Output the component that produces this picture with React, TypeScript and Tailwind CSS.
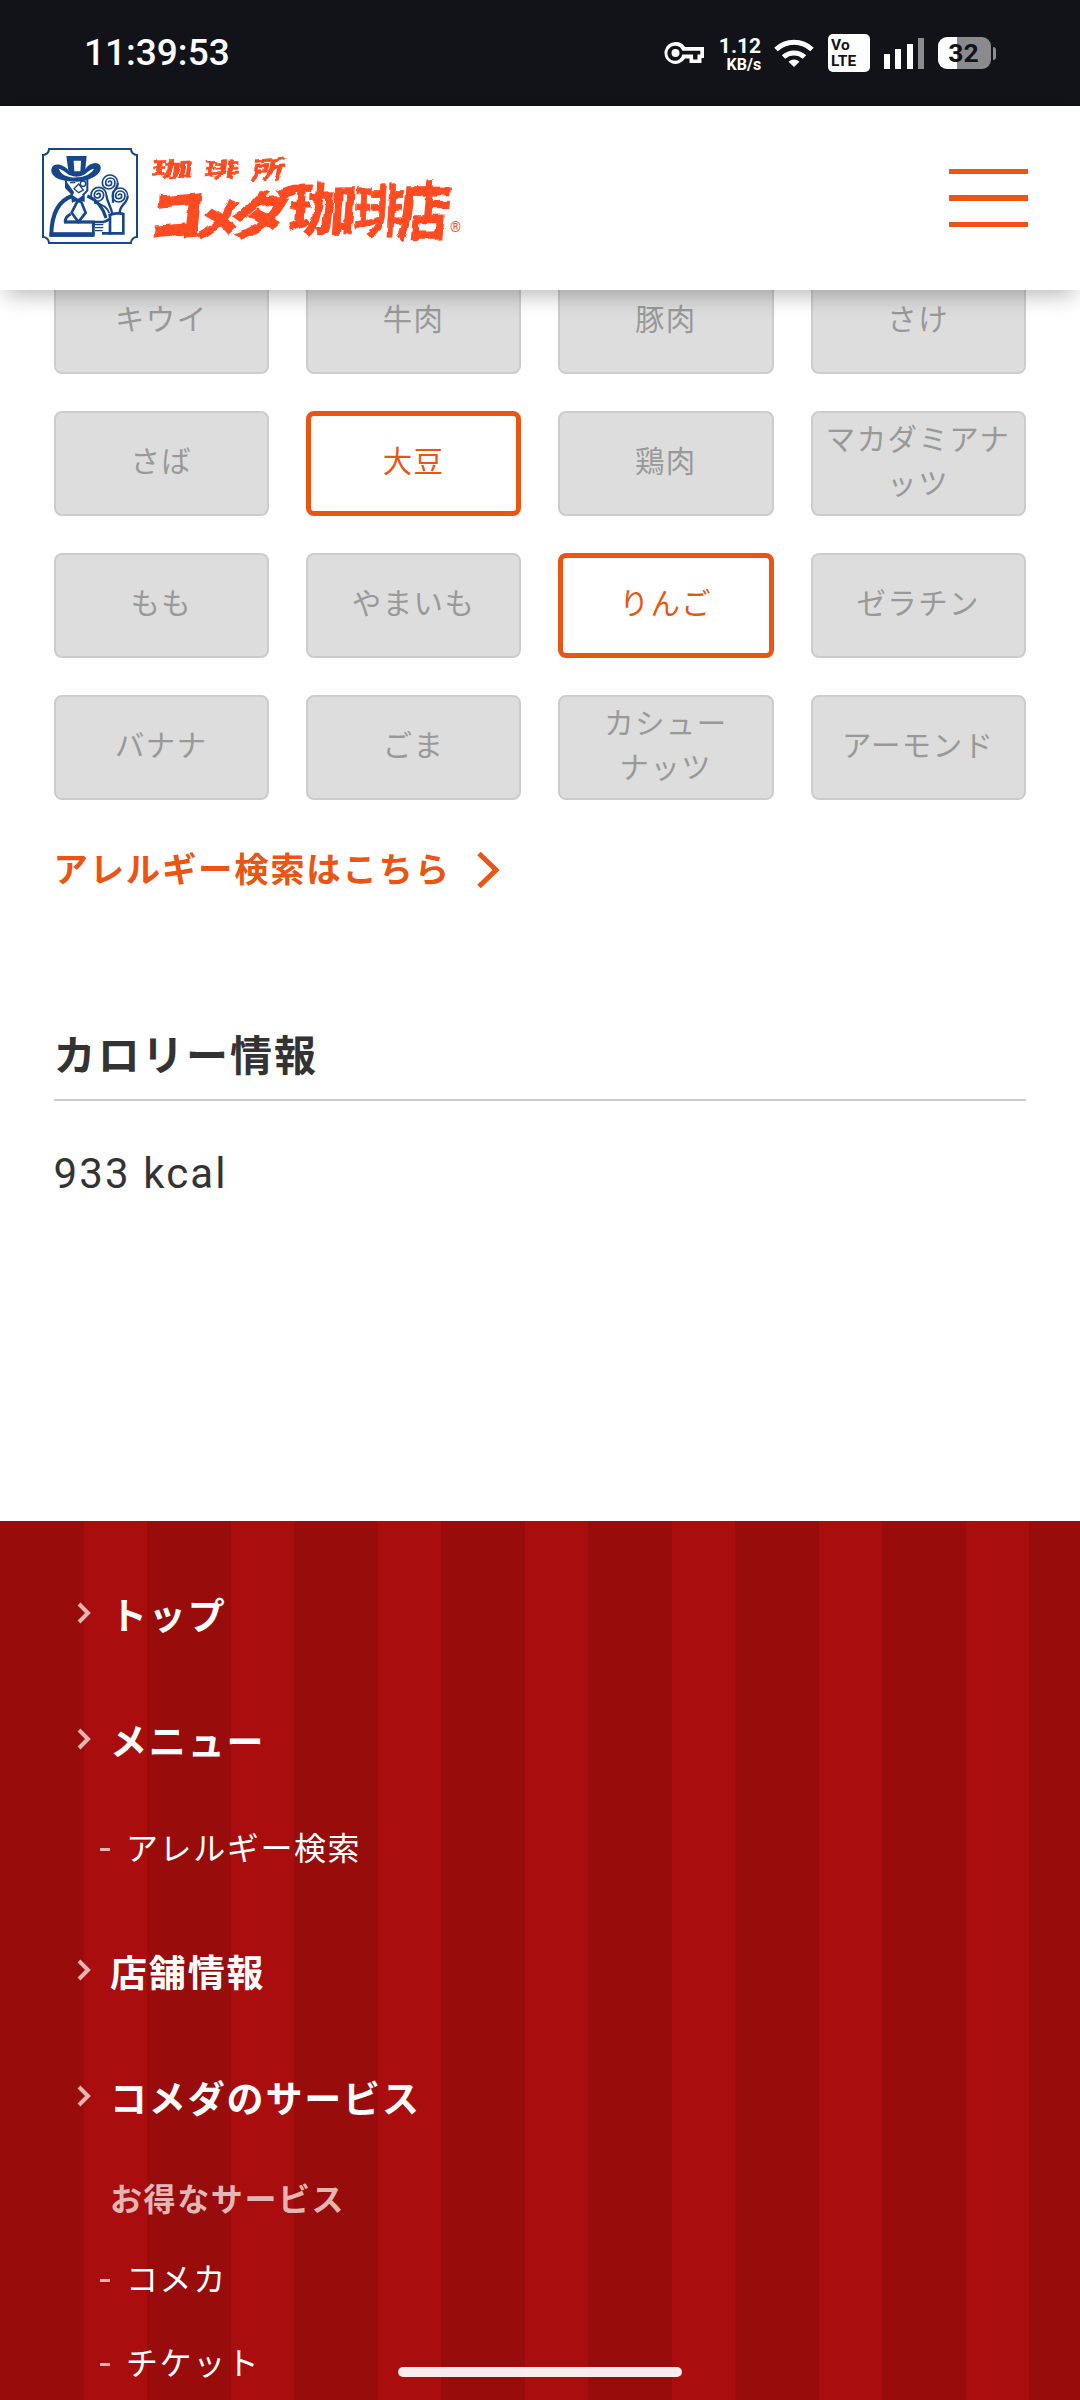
import React from 'react';

const allergens = [
  { name: 'キウイ' },
  { name: '牛肉' },
  { name: '豚肉' },
  { name: 'さけ' },
  { name: 'さば' },
  { name: '大豆', active: true },
  { name: '鶏肉' },
  { name: 'マカダミアナッツ' },
  { name: 'もも' },
  { name: 'やまいも' },
  { name: 'りんご', active: true },
  { name: 'ゼラチン' },
  { name: 'バナナ' },
  { name: 'ごま' },
  { name: 'カシューナッツ' },
  { name: 'アーモンド' },
];

const StatusBar = () => (
  <div className="h-[106px] shrink-0 bg-[#121318] text-white flex items-center justify-between pl-[84px] pr-[84px] font-[Roboto,sans-serif]">
    <span className="text-[37px] leading-none font-medium pb-[2px]">11:39:53</span>
    <div className="flex items-center">
      <svg className="w-10 h-6" viewBox="0 0 40 24">
        <path
          fillRule="evenodd"
          fill="#fff"
          d="M11.500 1a11 11 0 1 0 9.500 16.500h4.500v4.500h12v-5H40V6H21A11 11 0 0 0 11.500 1Zm0 3.800a7.500 7.500 0 0 1 6.800 5h18v3.600h-2.800v5h-4.400v-5H18.300a7.500 7.500 0 1 1-6.800-8.600Z"
        />
        <circle cx="11.500" cy="12" r="4" fill="#fff" />
      </svg>
      <div className="ml-4 w-[41px] pt-[3px] flex flex-col items-end font-bold">
        <span className="text-[21px] leading-[19px]">1.12</span>
        <span className="text-[16px] leading-[17px]">KB/s</span>
      </div>
      <svg className="ml-[13px] w-10 h-7" viewBox="0 0 40 28" fill="none" stroke="#fff" strokeWidth="5">
        <path d="M2 10.500a26 26 0 0 1 36 0" />
        <path d="M9.500 18a15.500 15.500 0 0 1 21 0" />
        <path d="M20 28l-5.500-5.200a8 8 0 0 1 11 0z" fill="#fff" stroke="none" />
      </svg>
      <div className="ml-[14px] w-[42px] h-[38px] rounded-[5px] bg-white text-[#121318] font-bold text-[15.500px] leading-[16px] pl-[3px] pt-[3px]">
        Vo
        <br />
        LTE
      </div>
      <div className="ml-[14px] flex items-end gap-[5.300px] h-[31px]">
        <span className="w-[6px] h-[15px] bg-white" />
        <span className="w-[6px] h-[20px] bg-white" />
        <span className="w-[6px] h-[25px] bg-white" />
        <span className="w-[6px] h-[31px] bg-[#8b8b8e]" />
      </div>
      <div className="ml-[14px] w-[53px] h-[32px] rounded-[9px] bg-[linear-gradient(90deg,#fff_19px,#8b8b8e_19px)] flex items-center justify-center pr-[2px] text-[#121318] text-[26.500px] leading-none font-bold">
        32
      </div>
      <span className="ml-[2px] w-[3px] h-[13px] rounded-r-[3px] bg-[#8b8b8e]" />
    </div>
  </div>
);

// three and a half turns, about 46 units wide, centred on the origin
const swirl = 'M-5 0a5 5 0 0 1 10 0a9 9 0 0 1-18 0a14 14 0 0 1 28 0a19 19 0 0 1-38 0a23 23 0 0 1 46 0';

const Mascot = () => (
  <svg className="w-24 h-24" viewBox="0 0 288 288" fill="none" stroke="#17478a" strokeWidth="6">
    <path d="M21 3h246c0 10 8 18 18 18v246c-10 0-18 8-18 18H21c0-10-8-18-18-18V21c10 0 18-8 18-18z" />
    {/* hat */}
    <path d="M73 24h61l-6 58q-22 16-47 0z" fill="#17478a" stroke="none" />
    <path d="M95 38h22l-2 32H97z" fill="#fff" stroke="none" />
    <path
      d="M80 68C66 48 36 42 29 60c-7 24 22 36 46 39 26 4 50 3 68-6 22-9 38-24 32-40-10-18-40-4-49 16q-22 16-46-1z"
      fill="#17478a"
      stroke="none"
    />
    <path d="M50 62c12 2 20 12 34 20 14 6 30 5 42-2 12-8 18-16 30-18-6 12-22 24-48 26-28 2-50-6-58-26z" fill="#fff" stroke="none" />
    {/* face */}
    <path d="M72 98v20l20 20M136 92v36l-14 14" />
    <path d="M70 96l26 36-4 12-22-24z" fill="#17478a" stroke="none" />
    <path d="M84 104h16M96 122l14-14 14 18-14 8z" strokeWidth="4" />
    <circle cx="123" cy="107" r="8" strokeWidth="4" />
    {/* coat */}
    <path d="M90 144C50 158 29 198 28 260h126" strokeWidth="12" />
    <path d="M136 144c30 12 46 32 56 66" strokeWidth="9" />
    <path d="M86 198q-18 10-16 24h84v14" strokeWidth="9" />
    <path d="M66 222h120M154 218v42" strokeWidth="8" />
    <path d="M158 230h26M158 239h26M158 248h24" strokeWidth="4" />
    <path d="M23 253h135v13H23z" fill="#17478a" stroke="none" />
    {/* tie */}
    <path d="M86 138l22 14 20-14v24l-16-6-22 8z" fill="#17478a" stroke="none" />
    <path d="M106 160l-17 34 20 28 22-28-14-34z" strokeWidth="8" fill="#fff" />
    {/* steam */}
    <g strokeWidth="5">
      <path transform="translate(204 104)" d={swirl} />
      <path transform="translate(170 141)" d={swirl} />
      <path transform="translate(234 143)" d={swirl} />
      <path d="M193 141c2 22 14 34 18 56M227 104c2 12-8 20-14 30v30M257 143c0 26-26 26-24 54" strokeWidth="7" />
      <path d="M156 164c24 4 40 12 46 32" />
    </g>
    {/* cup */}
    <path d="M204 200v56h40v-60" strokeWidth="8" fill="#fff" />
    <path d="M186 222l20-10M180 256h28" strokeWidth="8" />
    <path d="M200 202c12-6 34-8 46-4" strokeWidth="8" />
  </svg>
);

const BrandName = () => (
  <svg
    className="ml-4 w-[310px] h-24 overflow-visible font-['Noto_Sans_CJK_JP',sans-serif] font-bold"
    viewBox="0 0 310 96"
    fill="#ff4b22"
    stroke="#ff4b22"
  >
    {/* frays the edges like a dry brush */}
    <filter id="brush" x="-5%" y="-5%" width="110%" height="110%">
      <feTurbulence type="fractalNoise" baseFrequency="0.090" numOctaves="2" seed="4" />
      <feDisplacementMap in="SourceGraphic" scale="5" xChannelSelector="R" yChannelSelector="G" />
    </filter>
    <g filter="url(#brush)">
      <g strokeWidth="0.600" fontSize="24">
        <text transform="matrix(1.750 -0.050 -0.100 0.850 -3 29)">珈</text>
        <text transform="matrix(1.500 0 -0.100 0.850 49 29)">琲</text>
        <text transform="matrix(1.400 -0.100 -0.200 1.050 96 32)">所</text>
      </g>
      <g fontSize="50">
        <text strokeWidth="4" transform="matrix(1.080 -0.080 -0.120 1.080 -6 89)">コ</text>
        <text strokeWidth="4" transform="matrix(0.860 -0.080 -0.160 0.820 40 89)">メ</text>
        <text strokeWidth="2.500" transform="matrix(1.200 -0.080 -0.180 1.040 75 87)">ダ</text>
        <text strokeWidth="1" transform="matrix(1.360 -0.020 -0.080 1.150 133 83)">珈</text>
        <text strokeWidth="0.600" transform="matrix(1.020 0 -0.060 1.140 199 84)">琲</text>
        <text strokeWidth="1.200" transform="matrix(1.020 -0.020 -0.120 1.280 243 87)">店</text>
      </g>
    </g>
    <text x="296" y="84" fontSize="14" stroke="none" className="font-[Roboto] font-normal">®</text>
  </svg>
);

const Header = () => (
  <header className="relative z-10 h-[184px] shrink-0 bg-white flex items-center justify-between pl-[42px] pr-[52px] pb-1 shadow-[0_10px_22px_-6px_rgba(0,0,0,0.300)]">
    <div className="flex items-center">
      <Mascot />
      <BrandName />
    </div>
    <div className="mt-1 w-[79px] flex flex-col gap-[21px]">
      <span className="h-[5px] bg-[#ea5514]" />
      <span className="h-[6px] bg-[#ea5514]" />
      <span className="h-[5px] bg-[#ea5514]" />
    </div>
  </header>
);

const FooterLink = ({ children }: { children: React.ReactNode }) => (
  <a className="h-[54px] flex items-center pl-[77px] text-[37px] font-bold">
    <svg className="w-[14px] h-[22px] mr-[19px] -mt-2" viewBox="0 0 14 22" fill="none" stroke="#e3b6b6" strokeWidth="4">
      <path d="M2 2l9 9-9 9" />
    </svg>
    {children}
  </a>
);

const FooterSubLink = ({ children }: { children: React.ReactNode }) => (
  <a className="h-[48px] flex items-center pl-[100px] text-[32px]">
    <span className="w-[10px] h-[3px] mr-4 bg-[#e3b6b6]" />
    {children}
  </a>
);

const Footer = () => (
  <footer className="flex-1 flex flex-col pt-[69px] text-white leading-none bg-[repeating-linear-gradient(90deg,#980c0b_0_84px,#a90d0e_84px_147px)] [&_*]:tracking-[0.050em]">
    <FooterLink>トップ</FooterLink>
    <div className="h-[72px]" />
    <FooterLink>メニュー</FooterLink>
    <div className="h-[55px]" />
    <FooterSubLink>アレルギー検索</FooterSubLink>
    <div className="h-[74px]" />
    <FooterLink>店舗情報</FooterLink>
    <div className="h-[72px]" />
    <FooterLink>コメダのサービス</FooterLink>
    <div className="h-[49px]" />
    <p className="h-[48px] flex items-center pl-[110px] text-[32px] font-bold text-[#e3b6b6]">お得なサービス</p>
    <div className="h-[32px]" />
    <FooterSubLink>コメカ</FooterSubLink>
    <div className="h-[36px]" />
    <FooterSubLink>チケット</FooterSubLink>
  </footer>
);

const App = () => (
  <div className="relative w-[1080px] h-[2400px] overflow-hidden bg-white flex flex-col text-[#333] font-[Roboto,'Noto_Sans_CJK_JP',sans-serif]" lang="ja">
    <StatusBar />
    <Header />

    <main className="h-[1231px] shrink-0 pl-[53.600px] pr-[54.200px] [&_*]:tracking-[0.050em]">
      <div className="-mt-[21px] grid grid-cols-4 gap-[37px]">
        {allergens.map((item) => (
          <div
            key={item.name}
            className={`h-[105px] rounded-lg flex items-center justify-center text-center text-[29.400px] leading-[44px] pb-1 ${
              item.active
                ? 'border-[5px] border-[#ea5514] bg-white text-[#ea5514]'
                : 'border-2 border-[#ccc] bg-[#ddd] text-[#999] px-2'
            }`}
          >
            {item.name === 'カシューナッツ' ? (
              <span>
                カシュー
                <br />
                ナッツ
              </span>
            ) : (
              item.name
            )}
          </div>
        ))}
      </div>

      <a className="mt-[44px] h-[52px] flex items-center text-[34.400px] leading-none font-bold text-[#ea5514]">
        アレルギー検索はこちら
        <svg className="ml-[25px] w-[26px] h-[38px]" viewBox="0 0 26 38" fill="none" stroke="#ea5514" strokeWidth="5">
          <path d="M3 2.500L20 19 3 35.500" />
        </svg>
      </a>

      <h2 className="mt-[127px] h-[78px] pt-[5px] border-b-2 border-[#ccc] text-[42px] leading-[58px] font-bold">カロリー情報</h2>
      <p className="mt-[43px] text-[42px] leading-[60px]">933 kcal</p>
    </main>

    <Footer />

    {/* gesture bar */}
    <div className="absolute bottom-[23px] left-[398px] w-[284px] h-[10px] rounded-full bg-white/92" />
  </div>
);

export default App;
